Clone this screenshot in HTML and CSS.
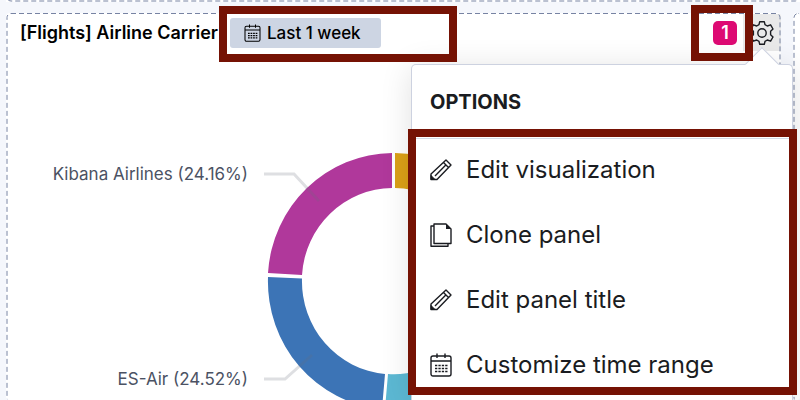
FILE: index.html
```html
<!DOCTYPE html>
<html lang="en">
<head>
<meta charset="utf-8">
<title>Dashboard</title>
<link rel="stylesheet" href="styles.css">
</head>
<body>
<svg class="symbols" aria-hidden="true">
  <symbol id="pencil" viewBox="0 0 22 24">
    <path d="M16 2 21 7 7 21.500H1V16Z M13.500 4.500 18.500 9.500 M5 18 15.800 7" fill="none" stroke="currentColor" stroke-width="1.400" stroke-linejoin="round"/>
    <path d="M1 17.500V21.500H5Z" fill="currentColor" stroke="currentColor"/>
  </symbol>
  <symbol id="copy" viewBox="0 0 22 24">
    <path d="M4 1H16L21 6V20.500H4Z M4 3H1V23.300H18V20.500" fill="none" stroke="currentColor" stroke-width="1.400" stroke-linejoin="round"/>
    <path d="M16 1V6H21Z" fill="currentColor"/>
  </symbol>
  <symbol id="calendar" viewBox="0 0 22 24">
    <rect x="1" y="3" width="20" height="20" rx="2" fill="none" stroke="currentColor" stroke-width="1.400"/>
    <path d="M1 8H21 M7 .5V5 M15 .5V5" fill="none" stroke="currentColor" stroke-width="1.400"/>
    <path d="M5 12.500H17.500 M5 15.500H17.500 M5 18.500H17.500" fill="none" stroke="currentColor" stroke-width="1.500" stroke-dasharray="2.300 1.100"/>
  </symbol>
</svg>
<main class="dashboard">
  <section class="panel panel-above"><svg class="outline"><rect class="outline-rect" y="-20" rx="4"/></svg></section>
  <section class="panel panel-main">
    <header class="panel-header">
      <h2 class="panel-title">[Flights] Airline Carrier</h2>
      <button class="time-badge" type="button"><svg class="badge-icon"><use href="#calendar"/></svg>Last 1 week</button>
      <span class="count">1</span>
      <button class="gear" type="button" aria-label="Panel options">
        <svg class="gear-icon" viewBox="0 0 24 24" fill="none" stroke="currentColor" stroke-width="1.400" stroke-linejoin="round"><circle cx="12" cy="12" r="4.200"/><path d="M9.700 .7H14.300L15 3.700 17.300 5 20.600 3.800 23 8 20.600 10.300V13.700L23 16 20.600 20.200 17.300 19 15 20.300 14.300 23.300H9.700L9 20.300 6.700 19 3.400 20.200 1 16 3.400 13.700V10.300L1 8 3.400 3.800 6.700 5 9 3.700Z"/></svg>
      </button>
    </header>
    <svg class="chart" viewBox="0 0 600 380" role="img" aria-label="Airline carriers">
      <path fill="#b0389b" d="M386 102A125 128 0 0 0 262 222L296 224A91 93 0 0 1 386 137Z"/>
      <path fill="#3c74b6" d="M262 226A125 128 0 0 0 376 358L379 323A91 93 0 0 1 296 227.500Z"/>
      <path fill="#5cb8d3" d="M379 358A125 128 0 0 0 513 230L479 230A91 93 0 0 1 382 323Z"/>
      <path fill="#dba017" d="M389 102A125 128 0 0 1 513 227L479 227A91 93 0 0 0 389 137Z"/>
      <path class="leader" d="M258 123H288L313 150M258 328H279L306 304"/>
      <text class="label" x="242" y="129">Kibana Airlines (24.16%)</text>
      <text class="label" x="242" y="334">ES-Air (24.52%)</text>
    </svg>
    <svg class="outline"><rect class="outline-rect" y="0.500" rx="4"/></svg>
  </section>
  <section class="panel panel-side"><svg class="outline"><rect class="outline-rect" y="0.500" rx="4"/></svg></section>
</main>
<div class="popover">
  <h3 class="popover-title">Options</h3>
  <div class="menu">
    <button class="item" type="button"><svg class="icon"><use href="#pencil"/></svg>Edit visualization</button>
    <button class="item" type="button"><svg class="icon"><use href="#copy"/></svg>Clone panel</button>
    <button class="item" type="button"><svg class="icon"><use href="#pencil"/></svg>Edit panel title</button>
    <button class="item" type="button"><svg class="icon"><use href="#calendar"/></svg>Customize time range</button>
  </div>
</div>
<div class="mark mark-time"></div>
<div class="mark mark-count"></div>
<div class="mark mark-menu"></div>
</body>
</html>
```
FILE: styles.css
```css
* { box-sizing: border-box; }
body {
  margin: 0;
  position: relative;
  height: 100vh;
  overflow: hidden;
  background: #f5f7fc;
  color: #1a1c21;
  font-family: Inter, "Liberation Sans", sans-serif;
}
button { border: 0; padding: 0; background: none; color: inherit; font: inherit; }
.symbols { position: absolute; width: 0; height: 0; }
.dashboard {
  display: grid;
  grid-template-columns: minmax(0, 1fr) 7px;
  grid-template-rows: 2px minmax(0, 1fr);
  gap: 11px 12px;
  height: 100vh;
  padding-left: 6px;
}
.panel { position: relative; overflow: hidden; border-radius: 4px; background: #fff; }
.panel-above { grid-column: 1 / 3; border-radius: 0; }
.outline { position: absolute; top: 0; left: 0; width: 100%; height: 100%; pointer-events: none; }
.outline-rect {
  x: 1px;
  width: calc(100% - 2px);
  height: calc(100% + 20px);
  fill: none;
  stroke: #7783a3;
  stroke-width: 1px;
  stroke-dasharray: 5 3;
}
.panel-above .outline-rect { height: 21px; }
.panel-side .outline-rect { width: 40px; }
.panel-header { display: flex; align-items: center; height: 38px; padding: 1px 0 0 14px; }
.panel-title { margin: 0; font-size: 18px; line-height: 24px; font-weight: 600; color: #000; white-space: nowrap; }
.time-badge {
  display: flex;
  align-items: center;
  gap: 6px;
  height: 30px;
  margin-left: 12px;
  padding: 0 20px 0 14px;
  border-radius: 3px;
  background: #cdd5e3;
  color: #000;
  font-size: 17px;
  font-weight: 500;
  white-space: nowrap;
}
.badge-icon { width: 17px; height: 18px; }
.count {
  width: 24px;
  margin-left: auto;
  border-radius: 5px;
  background: #dd0a73;
  color: #fff;
  font-size: 18px;
  line-height: 24px;
  font-weight: 600;
  text-align: center;
}
.gear { display: flex; align-self: stretch; align-items: center; justify-content: center; width: 38px; margin-left: 6px; background: #e9e9e9; }
.gear-icon { width: 24px; height: 24px; }
.chart { display: block; width: 600px; }
.leader { fill: none; stroke: #696f7d; stroke-opacity: .22; stroke-width: 3; }
.label { fill: #4b5263; font-size: 17px; text-anchor: end; }
.popover {
  position: absolute;
  top: 64px;
  right: 7px;
  bottom: 0;
  width: 382px;
  border: 1px solid #cdd2e0;
  border-bottom: 0;
  border-radius: 5px 5px 0 0;
  background: #fff;
  box-shadow: 0 4px 32px rgba(0, 0, 0, .12);
}
.popover::before {
  content: "";
  position: absolute;
  top: -13px;
  right: 18px;
  width: 23px;
  height: 23px;
  border: solid #cdd2e0;
  border-width: 1px 0 0 1px;
  background: #fff;
  transform: rotate(45deg);
}
.popover-title {
  margin: 0;
  padding: 24px 18px 23px;
  border-bottom: 1px solid #d3dae6;
  font-size: 20px;
  line-height: 26px;
  font-weight: 700;
  text-transform: uppercase;
}
.menu { display: flex; flex-direction: column; gap: 3px; }
.item { display: flex; align-items: center; gap: 14px; height: 62px; padding: 0 18px; font-size: 24px; line-height: 30px; text-align: left; }
.icon { width: 22px; height: 24px; }
.mark { position: absolute; border: 8px solid #751204; pointer-events: none; }
.mark-time { top: 6px; left: 219px; width: 238px; height: 56px; }
.mark-count { top: 5px; right: 47px; width: 62px; height: 56px; }
.mark-menu { top: 129px; right: 3px; width: 389px; height: 266px; }
```
